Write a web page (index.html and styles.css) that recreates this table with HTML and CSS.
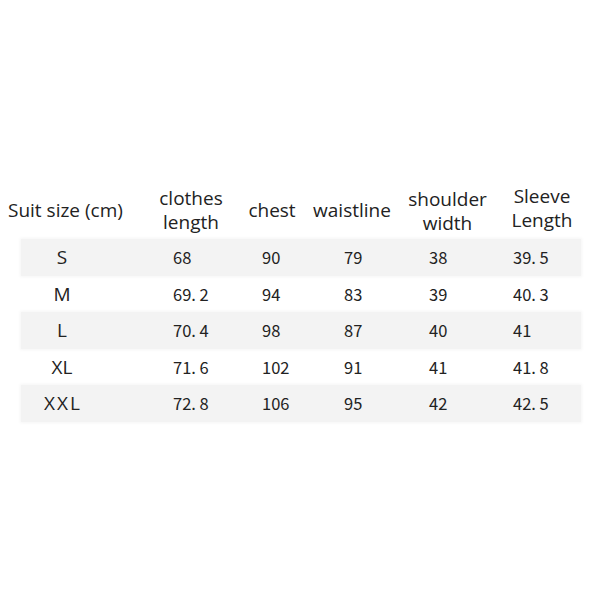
FILE: index.html
```html
<!DOCTYPE html>
<html lang="en">
<head>
<meta charset="utf-8">
<title>Suit size chart</title>
<link rel="stylesheet" href="styles.css">
</head>
<body>
<div class="chart">
  <div class="head">
    <div class="h first">Suit size (cm)</div>
    <div class="h">clothes<br>length</div>
    <div class="h chest">chest</div>
    <div class="h">waistline</div>
    <div class="h shoulder">shoulder<br>width</div>
    <div class="h sleeve">Sleeve<br>Length</div>
  </div>
  <div class="rows">
    <div class="row band"><span class="size">S</span><span class="num">68</span><span class="num">90</span><span class="num">79</span><span class="num">38</span><span class="num">39. 5</span></div>
    <div class="row"><span class="size">M</span><span class="num">69. 2</span><span class="num">94</span><span class="num">83</span><span class="num">39</span><span class="num">40. 3</span></div>
    <div class="row band"><span class="size">L</span><span class="num">70. 4</span><span class="num">98</span><span class="num">87</span><span class="num">40</span><span class="num">41</span></div>
    <div class="row"><span class="size">XL</span><span class="num">71. 6</span><span class="num">102</span><span class="num">91</span><span class="num">41</span><span class="num">41. 8</span></div>
    <div class="row band"><span class="size xxl">XXL</span><span class="num">72. 8</span><span class="num">106</span><span class="num">95</span><span class="num">42</span><span class="num">42. 5</span></div>
  </div>
</div>
</body>
</html>
```

FILE: styles.css
```css
html, body {
  margin: 0;
  padding: 0;
  background: #ffffff;
}

body {
  width: 600px;
  height: 600px;
  overflow: hidden;
  color: #222222;
  font-family: "Open Sans", "Noto Sans", sans-serif;
}

.chart {
  padding-top: 185px;
}

.head {
  display: grid;
  grid-template-columns: 144px 78px 74px 96px 95px 94px;
  padding-left: 8px;
  align-items: center;
  height: 48px;
  font-size: 19px;
  line-height: 24px;
}

.h {
  text-align: center;
  white-space: nowrap;
}

.h.first {
  text-align: left;
}

.h.chest {
  padding-left: 10px;
}

.h.shoulder {
  margin-top: 2px;
}

.h.sleeve {
  margin-top: -5px;
}

.rows {
  margin-top: 6px;
}

.row {
  display: grid;
  grid-template-columns: 152px 89px 82px 85px 84px 68px;
  align-items: center;
  width: 560px;
  height: 36.5px;
  margin-left: 21px;
}

.row.band {
  background: #f3f3f3;
  box-shadow: 0 0 3px 1px #f5f5f5;
}

.size {
  width: 82px;
  text-align: center;
  font-size: 19px;
}

.size.xxl {
  letter-spacing: 2px;
  text-indent: 2px;
}

.num {
  font-family: "Noto Sans CJK SC", "Noto Sans", sans-serif;
  font-size: 16.5px;
  white-space: pre;
}
```
